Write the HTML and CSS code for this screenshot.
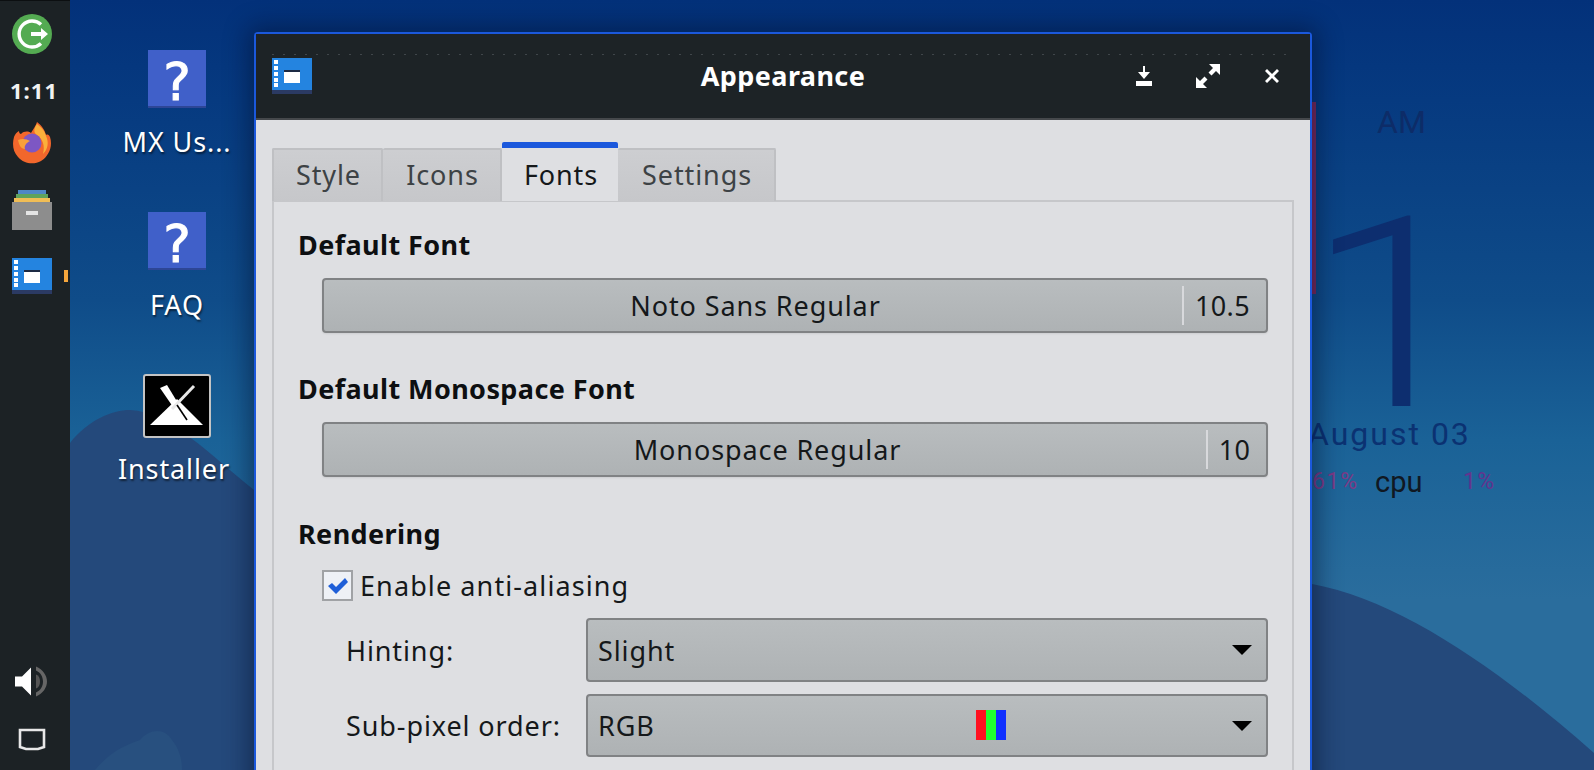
FILE: index.html
```html
<!DOCTYPE html>
<html lang="en">
<head>
<meta charset="utf-8">
<title>Appearance</title>
<link rel="stylesheet" href="styles.css">
</head>
<body>
<svg width="0" height="0" class="defs">
  <symbol id="app" viewBox="0 0 40 36">
    <rect x="0" y="0" width="40" height="32" fill="#2484e0"/>
    <rect x="0" y="32" width="40" height="4" fill="#2b3a63"/>
    <rect x="2" y="2" width="4" height="4" fill="#fff"/>
    <rect x="2" y="8" width="4" height="4" fill="#fff"/>
    <rect x="2" y="14" width="4" height="4" fill="#fff"/>
    <rect x="2" y="20" width="4" height="4" fill="#fff"/>
    <rect x="2" y="25" width="4" height="4" fill="#fff"/>
    <rect x="12" y="12" width="16" height="13" fill="#fff"/>
    <rect x="12" y="12" width="16" height="2" fill="#1c2a44"/>
  </symbol>
</svg>
<div class="desktop">
  <svg class="wallpaper" viewBox="0 0 1594 770" preserveAspectRatio="none">
    <path d="M70 443C88 420 112 410 130 410C170 412 210 455 254 490L700 540L1312 584C1400 600 1500 670 1594 753V770H70Z" fill="#24497b"/>
    <path d="M95 770C110 752 125 745 140 740C150 728 165 728 172 740C180 750 182 760 182 770Z" fill="#28507f"/>
  </svg>

  <div class="conky">
    <div class="conky-red"></div>
    <div class="conky-am">AM</div>
    <div class="conky-one">1</div>
    <div class="conky-date">August 03</div>
    <div class="conky-stats"><span class="pct pct-a">61%</span><span class="cpu">cpu</span><span class="pct pct-b">1%</span></div>
  </div>

  <aside class="panel">
    <div class="panel-top">
      <svg class="ico-power" viewBox="0 0 40 40">
        <circle cx="20" cy="20" r="20" fill="#54ab52"/>
        <path d="M29 10.5A13 13 0 1 0 29 29.5" fill="none" stroke="#fff" stroke-width="3.4"/>
        <path d="M19 18h10v-4l7 6-7 6v-4H19Z" fill="#fff"/>
      </svg>
      <div class="clock">1:11</div>
      <svg class="ico-firefox" viewBox="0 0 40 42">
        <path d="M2 15C3 12 5 10 7 9C7 11 8 12 9 12C12 9 16 9 19 11C21 7 24 4 25 0C29 3 33 8 34 13C36 12 37 13 38 15C41 24 37 34 29 39C22 43 12 42 6 35C1 30 0 22 2 15Z" fill="#f2672c"/>
        <path d="M25 2C29 5 33 9 34 14C37 20 36 27 31 32C33 24 31 17 25 13C22 11 21 8 25 2Z" fill="#fbb03b"/>
        <circle cx="20" cy="21" r="9.5" fill="#7d57c4"/>
        <path d="M6 18C10 16 15 17 18 19C14 21 12 24 13 27C9 27 7 23 6 18Z" fill="#f9a13a"/>
      </svg>
      <svg class="ico-drawer" viewBox="0 0 40 40">
        <rect x="6" y="0" width="28" height="4" fill="#4f87c6"/>
        <rect x="4" y="4" width="32" height="4" fill="#5fa35c"/>
        <rect x="2" y="8" width="36" height="4" fill="#f0bd55"/>
        <rect x="0" y="12" width="40" height="28" fill="#8d8d8d"/>
        <rect x="14" y="21" width="12" height="4" fill="#e4e4e4"/>
      </svg>
      <div class="running">
        <svg class="ico-app"><use href="#app"/></svg>
        <span class="running-mark"></span>
      </div>
    </div>
    <div class="panel-bottom">
      <svg class="ico-speaker" viewBox="0 0 34 32">
        <path d="M0 11H7L16 2V30L7 21H0Z" fill="#fff"/>
        <path d="M21 1C28 4 32 10 32 16S28 28 21 31V27C26 25 28 20 28 16S26 7 21 5Z" fill="#666"/>
        <path d="M21 9C24 10 25 13 25 16S24 22 21 23Z" fill="#555"/>
      </svg>
      <svg class="ico-screen" viewBox="0 0 28 24">
        <path d="M2 2H26V19L20 21H8L2 19Z" fill="none" stroke="#e8e8e8" stroke-width="2.6"/>
      </svg>
    </div>
  </aside>

  <div class="desk-icon desk-mx">
    <div class="help-tile">?</div>
    <div class="desk-label">MX Us...</div>
  </div>
  <div class="desk-icon desk-faq">
    <div class="help-tile">?</div>
    <div class="desk-label">FAQ</div>
  </div>
  <div class="desk-icon desk-inst">
    <svg class="inst-tile" viewBox="0 0 68 64">
      <rect x="1" y="1" width="66" height="62" rx="2" fill="#000" stroke="#c4c4c4" stroke-width="2"/>
      <path d="M7 51L34 25L60 51Z" fill="#fff"/>
      <path d="M17 14L24 11L44 44L39 46Z" fill="#fff"/>
      <path d="M51 12L29 35" stroke="#e8e8e8" stroke-width="3" fill="none"/>
      <path d="M34 31L44 46" stroke="#000" stroke-width="1.6" fill="none"/>
    </svg>
    <div class="desk-label">Installer</div>
  </div>

  <main class="window">
    <header class="titlebar">
      <div class="title-dots"></div>
      <svg class="title-icon"><use href="#app"/></svg>
      <div class="title-text">Appearance</div>
      <div class="title-buttons">
        <svg class="tb tb-min" viewBox="0 0 16 20"><path d="M7 0H9V6H14L8 13L2 6H7Z M0 15H16V20H0Z" fill="#fff"/></svg>
        <svg class="tb tb-max" viewBox="0 0 24 24"><path d="M13 0H24V11L20 7L15.5 11.5L12.5 8.5L17 4Z M0 13V24H11L7 20L11.5 15.5L8.5 12.5L4 17Z" fill="#fff"/></svg>
        <svg class="tb tb-close" viewBox="0 0 16 16"><path d="M3 1L8 6L13 1L15 3L10 8L15 13L13 15L8 10L3 15L1 13L6 8L1 3Z" fill="#fff"/></svg>
      </div>
    </header>
    <section class="content">
      <nav class="tabs">
        <div class="tab tab-style">Style</div>
        <div class="tab tab-icons">Icons</div>
        <div class="tab tab-fonts active">Fonts</div>
        <div class="tab tab-settings">Settings</div>
      </nav>
      <div class="pane">
        <h2 class="heading">Default Font</h2>
        <div class="fontbtn">
          <span class="fontbtn-name">Noto Sans Regular</span>
          <span class="fontbtn-size">10.5</span>
        </div>
        <h2 class="heading heading-mono">Default Monospace Font</h2>
        <div class="fontbtn">
          <span class="fontbtn-name">Monospace Regular</span>
          <span class="fontbtn-size fontbtn-size-sm">10</span>
        </div>
        <h2 class="heading heading-render">Rendering</h2>
        <label class="check">
          <span class="checkbox">
            <svg viewBox="0 0 22 18"><path d="M1 9L5 6L9 10L18 1L21 5L9 17Z" fill="#1f5fd8"/></svg>
          </span>
          <span>Enable anti-aliasing</span>
        </label>
        <div class="row">
          <span class="row-label">Hinting:</span>
          <div class="combo"><span>Slight</span><span class="arrow"></span></div>
        </div>
        <div class="row row-second">
          <span class="row-label">Sub-pixel order:</span>
          <div class="combo combo-rgb">
            <span>RGB</span>
            <span class="swatch"><i class="sw-r"></i><i class="sw-g"></i><i class="sw-b"></i></span>
            <span class="arrow"></span>
          </div>
        </div>
      </div>
    </section>
  </main>
</div>
</body>
</html>
```
FILE: styles.css
```css
* { box-sizing: border-box; }
html, body { margin: 0; height: 100%; overflow: hidden; }
body { font-family: "Noto Sans", sans-serif; color: #15181a; }
.defs { position: absolute; }
.desktop {
  position: relative; width: 1594px; height: 770px; overflow: hidden;
  background: linear-gradient(180deg, #03317a 0, #063a80 100px, #0f4c89 300px, #1a6297 440px, #2a6d9d 600px, #2a6d9d 770px);
}
.wallpaper { position: absolute; inset: 0; width: 100%; height: 100%; }

/* panel */
.panel {
  position: absolute; left: 0; top: 0; bottom: 0; width: 70px;
  background: #1c2225; display: flex; flex-direction: column; justify-content: space-between;
  align-items: center; padding: 13px 0 18px; border-top: 1px solid #0c0f11;
}
.panel-top, .panel-bottom { display: flex; flex-direction: column; align-items: center; width: 100%; }
.ico-power { width: 40px; height: 40px; margin-left: -6px; display: block; }
.clock { font-weight: 700; font-size: 22px; line-height: 26px; color: #f2f2f2; margin: 23px 0 0 -2px; letter-spacing: 1px; }
.ico-firefox { width: 40px; height: 42px; margin: 19px 0 0 -6px; display: block; }
.ico-drawer { width: 40px; height: 40px; margin: 26px 0 0 -6px; display: block; }
.running { position: relative; width: 100%; height: 36px; margin-top: 28px; }
.ico-app { position: absolute; left: 12px; top: 0; width: 40px; height: 36px; display: block; }
.running-mark { position: absolute; left: 64px; top: 12px; width: 4px; height: 12px; background: #f5a63c; }
.ico-speaker { width: 34px; height: 33px; display: block; margin-left: -6px; }
.ico-screen { width: 28px; height: 24px; display: block; margin: 30px 0 0 -6px; }

/* desktop icons */
.desk-icon { position: absolute; width: 130px; display: flex; flex-direction: column; align-items: center; color: #fff; }
.desk-mx { left: 112px; top: 50px; }
.desk-faq { left: 112px; top: 212px; }
.desk-inst { left: 109px; top: 374px; }
.help-tile {
  width: 58px; height: 58px; background: #4060c9; border-bottom: 2px solid #2d4696;
  color: #fff; font-family: "DejaVu Sans", sans-serif; font-weight: 400; font-size: 52px; line-height: 64px; text-align: center;
  -webkit-text-stroke: 1px #fff;
}
.inst-tile { width: 68px; height: 64px; display: block; margin-left: 5px; }
.desk-label { font-size: 27px; line-height: 34px; margin-top: 17px; letter-spacing: .9px; text-shadow: 1px 2px 2px rgba(0,0,0,.55); white-space: nowrap; }
.desk-faq .desk-label { margin-top: 18px; }
.desk-inst .desk-label { margin-top: 14px; }

/* conky */
.conky-red { position: absolute; left: 1312px; top: 102px; width: 4px; height: 192px; background: #7e2a5c; }
.conky-am { position: absolute; left: 1377px; top: 104px; font: 32px/36px Roboto, sans-serif; color: #0d2c68; }
.conky-one { position: absolute; left: 1318px; top: 220px; height: 190px; font: 300 267px/190px Roboto, sans-serif; color: #0d2e6f; transform: scaleX(1.15); transform-origin: 78px 0; }
.conky-date { position: absolute; left: 1308px; top: 418px; font: 32px/32px Roboto, sans-serif; color: #0b3272; letter-spacing: 2px; white-space: nowrap; }
.conky-stats { position: absolute; left: 1312px; top: 466px; height: 32px; width: 190px; font: 29px/32px Roboto, sans-serif; display: flex; }
.pct { color: #7c3a86; font-size: 23px; letter-spacing: 1.2px; }
.pct-a { width: 63px; flex: none; }
.cpu { color: #101822; width: 88px; flex: none; }
.pct-b { color: #63348f; }

/* window */
.window {
  position: absolute; left: 254px; top: 32px; width: 1058px; height: 760px;
  border: 2px solid #1b58dc; border-bottom: 0; border-radius: 4px 4px 0 0;
  background: #dedfe2; box-shadow: 0 0 24px 6px rgba(0,10,40,.45);
  display: flex; flex-direction: column;
}
.titlebar {
  position: relative; height: 86px; flex: none; background: #1d2326; border-bottom: 2px solid #45484b;
  display: grid; grid-template-columns: 1fr auto 1fr; align-items: center; padding: 0 16px;
}
.title-dots {
  position: absolute; left: 16px; right: 16px; top: 20px; height: 1px;
  background: repeating-linear-gradient(90deg, #40464a 0, #40464a 2px, transparent 2px, transparent 11px);
}
.title-icon { width: 40px; height: 36px; display: block; justify-self: start; }
.title-text { color: #fff; font-weight: 700; font-size: 27px; letter-spacing: .4px; line-height: 36px; }
.title-buttons { display: flex; align-items: center; gap: 44px; justify-self: end; margin-right: 14px; }
.tb { display: block; flex: none; }
.tb-min { width: 16px; height: 20px; }
.tb-max { width: 24px; height: 24px; }
.tb-close { width: 16px; height: 16px; }

.content { flex: 1; padding: 22px 16px 0; }
.tabs { display: flex; align-items: flex-end; height: 59px; margin-bottom: -1px; position: relative; z-index: 1; }
.tab {
  height: 53px; background: linear-gradient(#cdced1, #c6c7ca); border: 2px solid #bfc0c3; border-bottom: 0; border-left-width: 0;
  font-size: 27px; letter-spacing: .9px; line-height: 50px; text-align: center; color: #3d4245; border-radius: 2px 2px 0 0;
  padding-left: 2px;
}
.tab-style { width: 111px; border-left-width: 2px; }
.tab-icons { width: 119px; }
.tab-fonts { width: 116px; }
.tab-settings { width: 158px; }
.tab.active {
  height: 59px; background: #dedfe2; border: 0; border-top: 6px solid #1b58dc; color: #15181a; line-height: 54px;
}
.pane { border: 2px solid #c6c7ca; padding: 0 24px; height: 600px; }
.heading { margin: 25px 0 0; font-size: 27px; letter-spacing: .4px; line-height: 36px; font-weight: 700; color: #0d0f11; }
.heading-mono { margin-top: 38px; }
.heading-render { margin-top: 39px; }
.fontbtn {
  margin: 15px 0 0 24px; height: 55px; border: 2px solid #808284; border-radius: 4px;
  background: linear-gradient(#b9bdbf, #aeb2b4); display: flex; align-items: stretch;
  font-size: 27px; letter-spacing: .9px; box-shadow: 0 1px 2px rgba(0,0,0,.08);
}
.fontbtn-name { flex: 1; text-align: center; line-height: 51px; color: #15181a; padding-left: 5px; }
.fontbtn-size { margin: 6px 0; width: 84px; border-left: 2px solid #d8d9dc; text-align: center; line-height: 39px; letter-spacing: .3px; padding-right: 5px; }
.fontbtn-size-sm { width: 60px; }
.check { display: flex; align-items: center; margin: 16px 0 0 24px; height: 35px; font-size: 27px; letter-spacing: 1.1px; gap: 7px; }
.checkbox {
  width: 31px; height: 31px; flex: none; background: #eef1f6; border: 2px solid #a0a2a5;
  display: flex; align-items: center; justify-content: center;
}
.checkbox svg { width: 22px; height: 18px; display: block; }
.row { display: flex; align-items: center; margin: 15px 0 0; font-size: 27px; letter-spacing: .9px; height: 64px; }
.row-second { margin-top: 12px; height: 63px; }
.row-label { width: 288px; padding-left: 48px; flex: none; }
.combo {
  flex: 1; height: 100%; border: 2px solid #808284; border-radius: 4px;
  background: linear-gradient(#b9bdbf, #aeb2b4); display: flex; align-items: center; justify-content: space-between;
  padding: 0 14px 0 10px; position: relative;
}
.arrow { width: 0; height: 0; border-left: 10px solid transparent; border-right: 10px solid transparent; border-top: 10px solid #000; display: block; flex: none; }
.swatch { position: absolute; left: 388px; top: 14px; display: flex; height: 30px; }
.swatch i { display: block; width: 10px; height: 100%; }
.sw-r { background: #ff1020; }
.sw-g { background: #20ff30; }
.sw-b { background: #1030ff; }
```
